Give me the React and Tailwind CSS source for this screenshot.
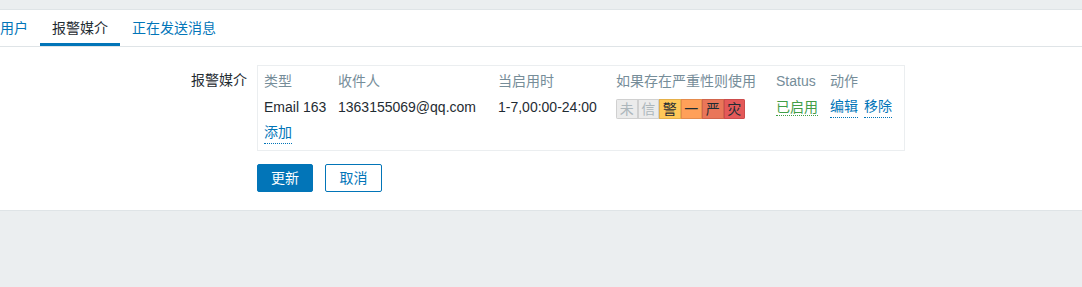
const font = { fontFamily: '"Liberation Sans", Arial, "Noto Sans CJK SC", sans-serif' }

const severities = [
  { label: '未', cls: 'bg-[#ebebeb] border-[#d0d0d0] text-[#acb6bb]' },
  { label: '信', cls: 'bg-[#ebebeb] border-[#d0d0d0] text-[#acb6bb]' },
  { label: '警', cls: 'bg-[#ffc859] border-[#e5b04a] text-[#1f2c33]' },
  { label: '一', cls: 'bg-[#ffa059] border-[#e58c4d] text-[#1f2c33]' },
  { label: '严', cls: 'bg-[#e97659] border-[#d1654c] text-[#1f2c33]' },
  { label: '灾', cls: 'bg-[#e45959] border-[#cc4c4c] text-[#1f2c33]' },
]

function Tabs() {
  const tabs = ['用户', '报警媒介', '正在发送消息']
  return (
    <div className="h-[37px] border-b border-[#dfe4e7] flex -ml-[12px]">
      {tabs.map((t, i) => (
        <div
          key={t}
          className={
            'px-3 h-full flex items-center text-[14px] border-b-[3px] ' +
            (i === 1 ? 'border-[#0275b8] text-[#1f2c33]' : 'border-transparent text-[#0275b8]')
          }
        >
          <span className="pt-[3px]">{t}</span>
        </div>
      ))}
    </div>
  )
}

function MediaTable() {
  const cols = 'grid grid-cols-[74px_160px_118px_160px_54px_1fr] items-center h-[26px]'
  return (
    <div className="w-[648px] h-[86px] border border-[#ebeef0] pl-[6px] pt-[2px] text-[14px]">
      <div className={cols + ' text-[#768d99]'}>
        <span>类型</span>
        <span>收件人</span>
        <span>当启用时</span>
        <span>如果存在严重性则使用</span>
        <span>Status</span>
        <span>动作</span>
      </div>
      <div className={cols + ' text-[#1f2c33]'}>
        <span>Email 163</span>
        <span>1363155069@qq.com</span>
        <span>1-7,00:00-24:00</span>
        <div className="flex rounded-[2px] overflow-hidden w-[129px] mt-[3px]">
          {severities.map((s) => (
            <span
              key={s.label}
              className={'w-[21.5px] h-[20px] border flex items-center justify-center leading-none ' + s.cls}
            >
              {s.label}
            </span>
          ))}
        </div>
        <span>
          <span className="text-[#429e47] border-b border-dotted border-[#429e47]">已启用</span>
        </span>
        <span className="flex gap-[6px] whitespace-nowrap">
          <span className="text-[#0275b8] border-b border-dotted border-[#0275b8]">编辑</span>
          <span className="text-[#0275b8] border-b border-dotted border-[#0275b8]">移除</span>
        </span>
      </div>
      <div className="h-[26px] flex items-center">
        <span className="text-[#0275b8] border-b border-dotted border-[#0275b8]">添加</span>
      </div>
    </div>
  )
}

export default function App() {
  return (
    <div className="w-[1082px] h-[287px] bg-[#ebeef0] overflow-hidden" style={font}>
      <div className="h-[9px]" />
      <div className="bg-white border-t border-b border-[#dfe4e7] h-[202px]">
        <Tabs />
        <div className="pt-[18px] flex">
          <div className="w-[247px] text-right text-[14px] text-[#1f2c33] pt-[5px] leading-[20px]">报警媒介</div>
          <div className="ml-[10px]">
            <MediaTable />
            <div className="flex gap-3 mt-[13px]">
              <button className="w-[56px] h-[28px] rounded-[2px] bg-[#0275b8] border border-[#0275b8] text-white text-[14px]">更新</button>
              <button className="w-[57px] h-[28px] rounded-[2px] bg-white border border-[#0275b8] text-[#0275b8] text-[14px]">取消</button>
            </div>
          </div>
        </div>
      </div>
    </div>
  )
}
